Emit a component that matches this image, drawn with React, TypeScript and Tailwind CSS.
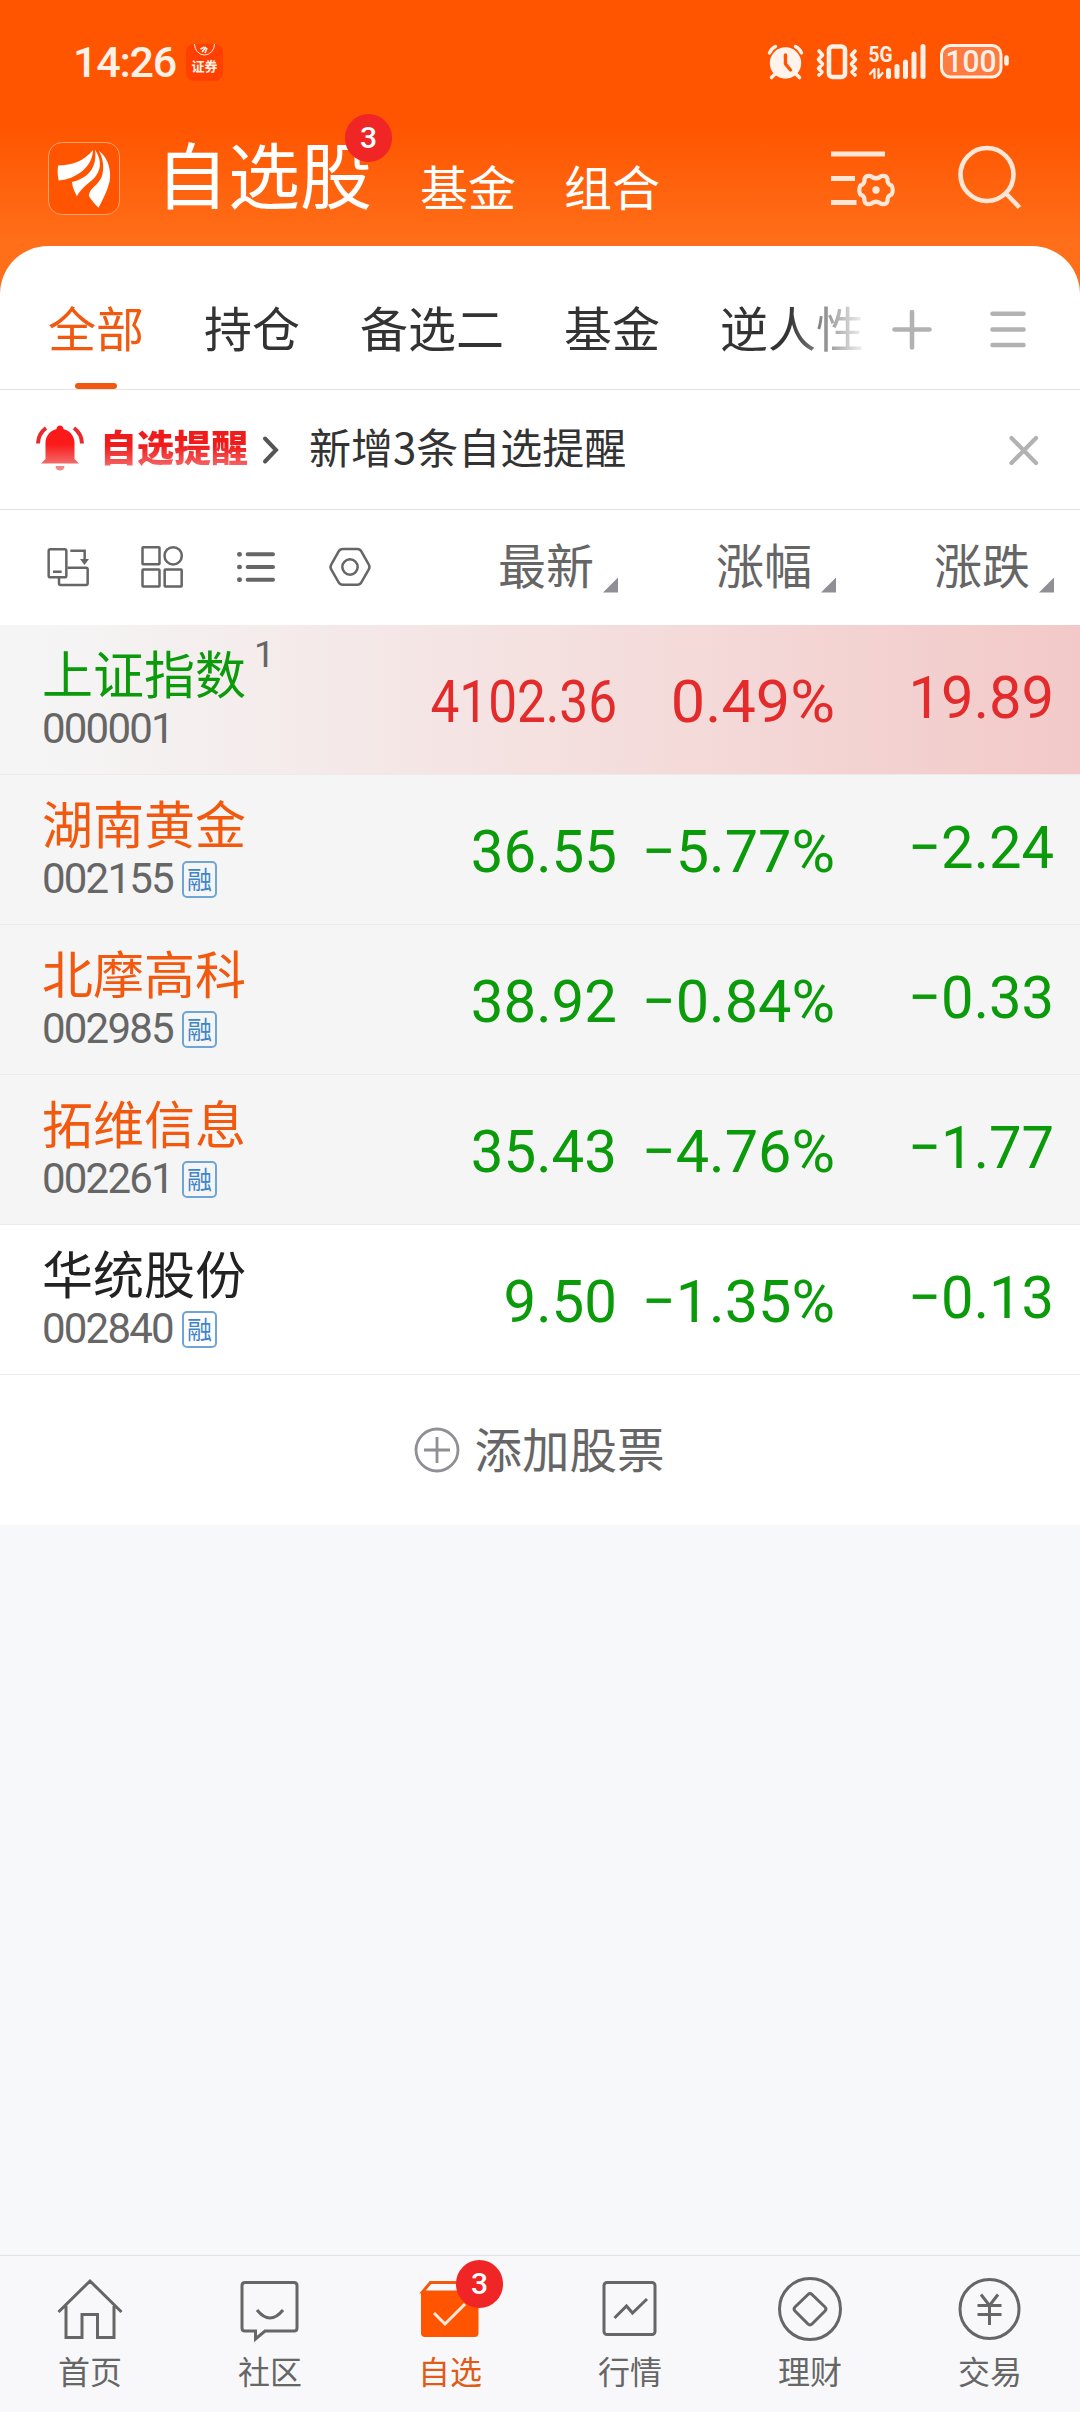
import React from 'react';

interface Stock {
  name: string;
  code: string;
  price: string;
  percent: string;
  change: string;
  nameColor: string;
  valueColor: string;
  rowStyle: string;
  margin?: boolean;
  mark?: string;
  narrow?: boolean;
}

const stocks: Stock[] = [
  {
    name: '上证指数',
    code: '000001',
    price: '4102.36',
    percent: '0.49%',
    change: '19.89',
    nameColor: 'text-[#0a9a0a]',
    valueColor: 'text-[#e32b2b]',
    rowStyle: 'bg-[linear-gradient(90deg,#f5f5f5_40px,#f4e1e0_540px,#f2c9c8_1080px)]',
    mark: '1',
    narrow: true,
  },
  {
    name: '湖南黄金',
    code: '002155',
    price: '36.55',
    percent: '−5.77%',
    change: '−2.24',
    nameColor: 'text-[#f2590f]',
    valueColor: 'text-[#0a9a0a]',
    rowStyle: 'bg-[#f5f5f5]',
    margin: true,
  },
  {
    name: '北摩高科',
    code: '002985',
    price: '38.92',
    percent: '−0.84%',
    change: '−0.33',
    nameColor: 'text-[#f2590f]',
    valueColor: 'text-[#0a9a0a]',
    rowStyle: 'bg-[#f5f5f5]',
    margin: true,
  },
  {
    name: '拓维信息',
    code: '002261',
    price: '35.43',
    percent: '−4.76%',
    change: '−1.77',
    nameColor: 'text-[#f2590f]',
    valueColor: 'text-[#0a9a0a]',
    rowStyle: 'bg-[#f5f5f5]',
    margin: true,
  },
  {
    name: '华统股份',
    code: '002840',
    price: '9.50',
    percent: '−1.35%',
    change: '−0.13',
    nameColor: 'text-[#222222]',
    valueColor: 'text-[#0a9a0a]',
    rowStyle: 'bg-white',
    margin: true,
  },
];

const Badge: React.FC<{ className: string; children: React.ReactNode }> = ({ className, children }) => (
  <span
    className={`absolute flex h-[48px] w-[47px] items-center justify-center rounded-full bg-[#f02525] font-[Roboto,sans-serif] text-[30px] leading-none font-medium text-white ${className}`}
  >
    {children}
  </span>
);

const StatusBar: React.FC = () => (
  <div className="flex h-[123px] items-start justify-between pt-[43px] pr-[70px] pl-[73px]">
    <div className="flex items-center gap-[10px]">
      <span className="w-[103px] font-[Roboto,sans-serif] text-[43px] leading-[38px] font-medium tracking-[-1.2px] text-[#fff1e8]">14:26</span>
      <span className="flex h-[37px] w-[37px] flex-col items-center overflow-hidden rounded-[8px] bg-[#ff4000]">
        <svg className="h-[13px] w-[37px] shrink-0" viewBox="0 0 37 13" fill="none" stroke="#fff1e8">
          <path d="M8.5 0a10 11 0 0 0 20 0" />
          <path d="M14.5 5l4-2M16 8l4-5M19 9l2-5" strokeWidth="1.6" />
        </svg>
        <span className="text-[13px] leading-[18px] font-bold text-[#fff1e8]">证券</span>
      </span>
    </div>
    <svg className="h-[38px] w-[244px] overflow-visible" viewBox="767 43 244 38" fill="none" stroke="#fff1e8" strokeLinecap="round" strokeLinejoin="round">
      {/* alarm */}
      <circle cx="786.5" cy="63" r="15.7" fill="#fff3ec" stroke="none" />
      <path d="M770.5 53a12 12 0 0 1 6-6.5M802.5 53a12 12 0 0 0-6-6.5" strokeWidth="3.4" />
      <path d="M776 74l-3.5 3.5M797 74l3.5 3.5" strokeWidth="3.6" />
      <path d="M786.5 55v9l5 6" stroke="#ff5500" strokeWidth="3.4" />
      {/* vibrate */}
      <rect x="830" y="46.5" width="16" height="30.5" rx="3.5" strokeWidth="4.6" />
      <path d="M820 51l3.5 4-4 4.5 4 4.5-4 4.5 3.5 3.5-3 3M856 51l-3.5 4 4 4.5-4 4.5 4 4.5-3.5 3.5 3 3" strokeWidth="3.6" />
      {/* signal */}
      <text x="869.5" y="61.5" className="font-[Roboto,sans-serif] text-[22.5px] font-bold" textLength="24" lengthAdjust="spacingAndGlyphs" fill="#fff1e8" stroke="none">
        5G
      </text>
      <path d="M875.5 78V69l-4.5 5M879.5 69v9l4-5" strokeWidth="2.2" />
      <path d="M889.5 70.5V76.5M898 66.5V76.5M906.5 62V76.5M915 54V76.5M924 46.5V76.5" strokeWidth="5" />
      {/* battery */}
      <rect x="942.5" y="45.5" width="59.5" height="31.5" rx="9" fill="#ff7c40" strokeWidth="3" />
      <path d="M1007.5 57.5v6" strokeWidth="4.6" />
      <text x="946.5" y="72.2" className="font-[Roboto,sans-serif] text-[31.5px] font-medium" textLength="51" lengthAdjust="spacingAndGlyphs" fill="#fff1e8" stroke="none">
        100
      </text>
    </svg>
  </div>
);

const Header: React.FC = () => (
  <div className="flex h-[123px] items-start pl-[48px]">
    <div className="mt-[19px] h-[73px] w-[72px] rounded-[14px] border border-[#ffa070] bg-[#ff5500]">
      <svg className="h-full w-full" viewBox="24 318 216 216" fill="white">
        <path d="M52 386C95 384 130 374 160 338C158 390 110 427 54 432C50 415 50 400 52 386Z" />
        <path d="M166 337C190 372 184 405 160 428C140 445 120 460 110 481C104 468 96 455 95 437C142 425 174 395 166 337Z" />
        <path d="M178 340C210 365 216 405 211 435C204 465 190 490 177 516C165 505 155 492 147 480C148 455 175 450 187 420C195 395 192 365 178 340Z" />
      </svg>
    </div>
    <div className="relative ml-[36px]">
      <h1 className="text-[72px] leading-[98px] text-white">自选股</h1>
      <Badge className="-top-[9px] left-[189px]">3</Badge>
    </div>
    <span className="mt-[32px] ml-[48px] text-[48px] leading-[60px] text-white">基金</span>
    <span className="mt-[32px] ml-[48px] text-[48px] leading-[60px] text-white">组合</span>
    <svg className="mt-[20px] ml-auto h-[72px] w-[72px]" viewBox="828 143 72 72" fill="none" stroke="#ffe6d6" strokeWidth="5">
      <path d="M831 154h54M831 178.5h24M831 202.5h25.5" />
      <path
        d="M870.5 176q5.5 4.5 11 0q5-1 6 3q-.5 5 4 6.500q2.500 4.500 0 9q-4.500 1.500-4 6.500q-1 4-6 3q-5.500-4.500-11 0q-5 1-6-3q.5-5-4-6.500q-2.500-4.500 0-9q4.500-1.500 4-6.500q1-4 6-3z"
        strokeWidth="4.2"
      />
      <circle cx="876" cy="190" r="3.7" fill="#ffe6d6" stroke="none" />
    </svg>
    <svg className="mt-[20px] mr-[52px] ml-[56px] h-[72px] w-[72px]" viewBox="956 143 72 72" fill="none" stroke="#ffe6d6" strokeWidth="4.6">
      <circle cx="987" cy="174.5" r="26.5" />
      <path d="M1006 193.5L1019.5 207.5" />
    </svg>
  </div>
);

const Tabs: React.FC = () => (
  <div className="flex h-[144px] items-start border-b border-[#e3e3e3] pl-[48px]">
    <div className="flex h-full w-[815px] items-start gap-[60px] overflow-hidden text-[48px] leading-[60px] whitespace-nowrap text-[#333333] [mask-image:linear-gradient(90deg,black_740px,transparent_820px)]">
      <div className="flex h-full flex-col items-center justify-between pt-[50px] text-[#f2590f]">
        <span>全部</span>
        <span className="h-[6px] w-[42px] rounded-full bg-[#f2590f]" />
      </div>
      <span className="pt-[50px]">持仓</span>
      <span className="pt-[50px]">备选二</span>
      <span className="pt-[50px]">基金</span>
      <span className="pt-[50px]">逆人性</span>
    </div>
    <svg className="mt-[60px] ml-[25px] h-[48px] w-[48px]" viewBox="888 306 48 48" stroke="#b2b2b2" strokeWidth="4.6" strokeLinecap="round">
      <path d="M894.5 329.5h35M912 312v35.5" />
    </svg>
    <svg className="mt-[60px] ml-[48px] h-[48px] w-[48px]" viewBox="984 306 48 48" stroke="#b2b2b2" strokeWidth="4.6" strokeLinecap="round">
      <path d="M992.5 313.7h31M992.5 329.5h31M992.5 345h31" />
    </svg>
  </div>
);

const Notice: React.FC = () => (
  <div className="flex h-[120px] items-center border-b border-[#e3e3e3] pl-[34px]">
    <svg className="mb-[4px] h-[52px] w-[52px]" viewBox="34 421 52 52" fill="none">
      <defs>
        <linearGradient id="bell" x1="0" y1="0" x2="0" y2="1">
          <stop offset="0.5" stopColor="#fb1a1a" />
          <stop offset="1" stopColor="#f46a6a" />
        </linearGradient>
      </defs>
      <path
        d="M60 424.5c-2 0-3.3 1.5-3.5 3.5c-7 2-11 7.5-11 14v16l-4.5 4.5h38l-4.5-4.5v-16c0-6.5-4-12-11-14c-.2-2-1.5-3.5-3.5-3.5z"
        fill="url(#bell)"
      />
      <path d="M55.5 465h9c0 3-2 4.5-4.5 4.5s-4.500-1.500-4.500-4.500z" fill="#ee8a8a" />
      <path d="M46 427a20 20 0 0 0-8 15.5M74 427a20 20 0 0 1 8 15.5" stroke="#ea2a2a" strokeWidth="4" />
    </svg>
    <span className="mb-[7px] ml-[14px] bg-[linear-gradient(180deg,#f01c1c_50%,#f66a6a_90%)] bg-clip-text text-[37px] leading-[54px] font-black text-transparent">
      自选提醒
    </span>
    <svg className="ml-[11px] h-[30px] w-[24px]" viewBox="259 435 24 30" fill="none" stroke="#555555" strokeWidth="4" strokeLinecap="round">
      <path d="M265 438.5L276 450L265 461.5" />
    </svg>
    <span className="mb-[7px] ml-[26px] text-[42px] leading-[60px] text-[#333333]">新增3条自选提醒</span>
    <svg className="mr-[38px] ml-auto h-[36px] w-[36px]" viewBox="1006 432 36 36" stroke="#b2b2b2" strokeWidth="4.2" strokeLinecap="round">
      <path d="M1011.5 438L1036 463M1036 438L1011.5 463" />
    </svg>
  </div>
);

const columns = ['最新', '涨幅', '涨跌'];

const Toolbar: React.FC = () => (
  <div className="flex h-[115px] items-center">
    <div className="flex w-[400px] gap-[50px] pb-px pl-[46px]">
      <svg className="h-[44px] w-[44px]" viewBox="30 27 132 132" fill="none" stroke="#666666" strokeWidth="7.5">
        <rect x="38" y="40" width="53" height="84" rx="5" />
        <path d="M51 107h26M94 95h56q5 0 5 5v42q0 5-5 5H74q-5 0-5-5V126M103 44h43v26" />
        <path d="M132 69h27l-13.5 18z" fill="#666666" stroke="none" />
      </svg>
      <svg className="h-[44px] w-[44px]" viewBox="312 27 132 132" fill="none" stroke="#666666" strokeWidth="7.5">
        <rect x="319.5" y="33.5" width="51" height="51" rx="2" />
        <circle cx="411.5" cy="59.5" r="26" />
        <rect x="319.5" y="100.5" width="51" height="51" rx="2" />
        <rect x="386" y="100.5" width="51" height="51" rx="2" />
      </svg>
      <svg className="h-[44px] w-[44px]" viewBox="594 27 132 132" fill="none" stroke="#666666" strokeWidth="12" strokeLinecap="round">
        <path d="M610 55h1M610 93h1M610 131h1" strokeWidth="14" />
        <path d="M635 55h76M635 93h76M635 131h76" />
      </svg>
      <svg className="h-[44px] w-[44px]" viewBox="876 27 132 132" fill="none" stroke="#666666" strokeWidth="7.5" strokeLinejoin="round">
        <path d="M920 39h44q8 0 12 7l22 39q5 8 0 16l-22 38q-4 7-12 7h-44q-8 0-12-7l-22-38q-5-8 0-16l22-39q4-7 12-7z" />
        <circle cx="942" cy="93" r="23" />
      </svg>
    </div>
    {columns.map((column) => (
      <div key={column} className="flex w-[218px] items-end justify-end gap-[9px]">
        <span className="mb-[10px] text-[48px] leading-[60px] text-[#666666]">{column}</span>
        <span className="mb-[10px] h-[15px] w-[15px] bg-[#8f8f95] [clip-path:polygon(100%_0,100%_100%,0_100%)]" />
      </div>
    ))}
  </div>
);

const StockRow: React.FC<{ stock: Stock }> = ({ stock }) => (
  <div className={`flex h-[150px] items-center border-b border-[#ebebeb] ${stock.rowStyle}`}>
    <div className="w-[300px] pl-[42px]">
      <div className={`-mt-[6px] mb-[6px] flex items-start text-[51px] leading-[60px] ${stock.nameColor}`}>
        {stock.name}
        {stock.mark && (
          <span className="-mt-[6px] ml-[8px] font-[Roboto,sans-serif] text-[37px] leading-[37px] text-[#666666]">{stock.mark}</span>
        )}
      </div>
      <div className="-mt-px flex h-[44px] items-center">
        <span className="w-[140px] font-[Roboto,sans-serif] text-[42px] leading-[42px] tracking-[-1.8px] text-[#666666]">{stock.code}</span>
        {stock.margin && (
          <span className="flex h-[37px] w-[35px] items-center justify-center rounded-[5px] border-2 border-[#6fa5d6] pb-[3px] text-[25px] leading-[30px] text-[#3f86c6]">
            融
          </span>
        )}
      </div>
    </div>
    <div className={`flex font-[Roboto,sans-serif] text-[60px] leading-[60px] ${stock.valueColor}`}>
      <span className={`w-[317px] origin-right pt-[4px] text-right ${stock.narrow ? 'scale-x-[0.855]' : 'scale-x-[0.97]'}`}>{stock.price}</span>
      <span className={`w-[218px] origin-right pt-[4px] text-right ${stock.narrow ? 'scale-x-[1.02]' : 'scale-x-[0.99]'}`}>{stock.percent}</span>
      <span className="w-[219px] origin-right scale-x-[0.965] text-right">{stock.change}</span>
    </div>
  </div>
);

interface NavItem {
  label: string;
  icon: React.ReactNode;
  active?: boolean;
}

const navItems: NavItem[] = [
  {
    label: '首页',
    icon: <path d="M3.5 34L35 3L66.5 34M11 28V59.5H27V36.5H42.5V59.5H59V28" />,
  },
  {
    label: '社区',
    icon: (
      <>
        <path d="M10 4.5H59q3 0 3 3V50q0 3-3 3H30L20.5 61V53H10q-3 0-3-3V7.5q0-3 3-3z" />
        <path d="M22 32q13 16 26 0" />
      </>
    ),
  },
  {
    label: '自选',
    active: true,
    icon: (
      <>
        <path d="M7.5 14L15.5 4.5H54.5L62 14z" fill="#f8f8fa" stroke="#f2590f" />
        <path d="M6 13.5H63.5V55q0 4-4 4H10q-4 0-4-4z" fill="#ff5500" stroke="none" />
        <path d="M19 35L30 46L50 26" stroke="#ffe9dc" />
      </>
    ),
  },
  {
    label: '行情',
    icon: (
      <>
        <rect x="9" y="4.5" width="51" height="52" rx="3" />
        <path d="M19.5 40L31.5 28L37.5 35L52 21" />
      </>
    ),
  },
  {
    label: '理财',
    icon: (
      <>
        <circle cx="35" cy="31" r="30.5" />
        <path d="M33 16.5q2-2 4 0L50 29q2 2 0 4L37 46q-2 2-4 0L20 33q-2-2 0-4z" />
      </>
    ),
  },
  {
    label: '交易',
    icon: (
      <>
        <circle cx="34.5" cy="31" r="29.5" />
        <path d="M26 16.5L34.5 27.5L43 16.5M34.5 27V47M22.5 27.5H46.5M22.5 36.5H46.5" />
      </>
    ),
  },
];

const BottomNav: React.FC = () => (
  <nav className="flex h-[157px] border-t border-[#dfe3e6] bg-[#f8f8fa]">
    {navItems.map((item) => (
      <div key={item.label} className={`flex w-[180px] flex-col items-center pt-[22px] ${item.active ? 'text-[#e05a18]' : 'text-[#666666]'}`}>
        <div className="relative">
          <svg className="h-[64px] w-[70px] overflow-visible" viewBox="0 0 70 64" fill="none" stroke="currentColor" strokeWidth="3">
            {item.icon}
          </svg>
          {item.active && <Badge className="-top-[18px] left-[41px]">3</Badge>}
        </div>
        <span className="mt-[5px] text-[32px] leading-[46px]">{item.label}</span>
      </div>
    ))}
  </nav>
);

const App: React.FC = () => {
  return (
    <div className="flex h-[2412px] w-[1080px] flex-col overflow-hidden bg-[linear-gradient(180deg,#ff5500_125px,#ff6e19_240px)] font-['Noto_Sans_CJK_SC',sans-serif]">
      <StatusBar />
      <Header />
      <main className="rounded-t-[48px] bg-white">
        <Tabs />
        <Notice />
        <Toolbar />
        {stocks.map((stock) => (
          <StockRow key={stock.code} stock={stock} />
        ))}
        <button className="flex h-[150px] w-full items-center justify-center gap-[15px] pr-[2px] text-[47.5px] leading-[60px] text-[#666666]">
          <svg className="h-[46px] w-[46px]" viewBox="0 0 46 46" fill="none" stroke="#8f8f95" strokeWidth="2.8">
            <circle cx="23" cy="23" r="21" />
            <path d="M10 23H36M23 10V36" />
          </svg>
          <span className="mb-[5px]">添加股票</span>
        </button>
      </main>
      <div className="flex-1 bg-[#f7f8fa]" />
      <BottomNav />
    </div>
  );
};

export default App;
